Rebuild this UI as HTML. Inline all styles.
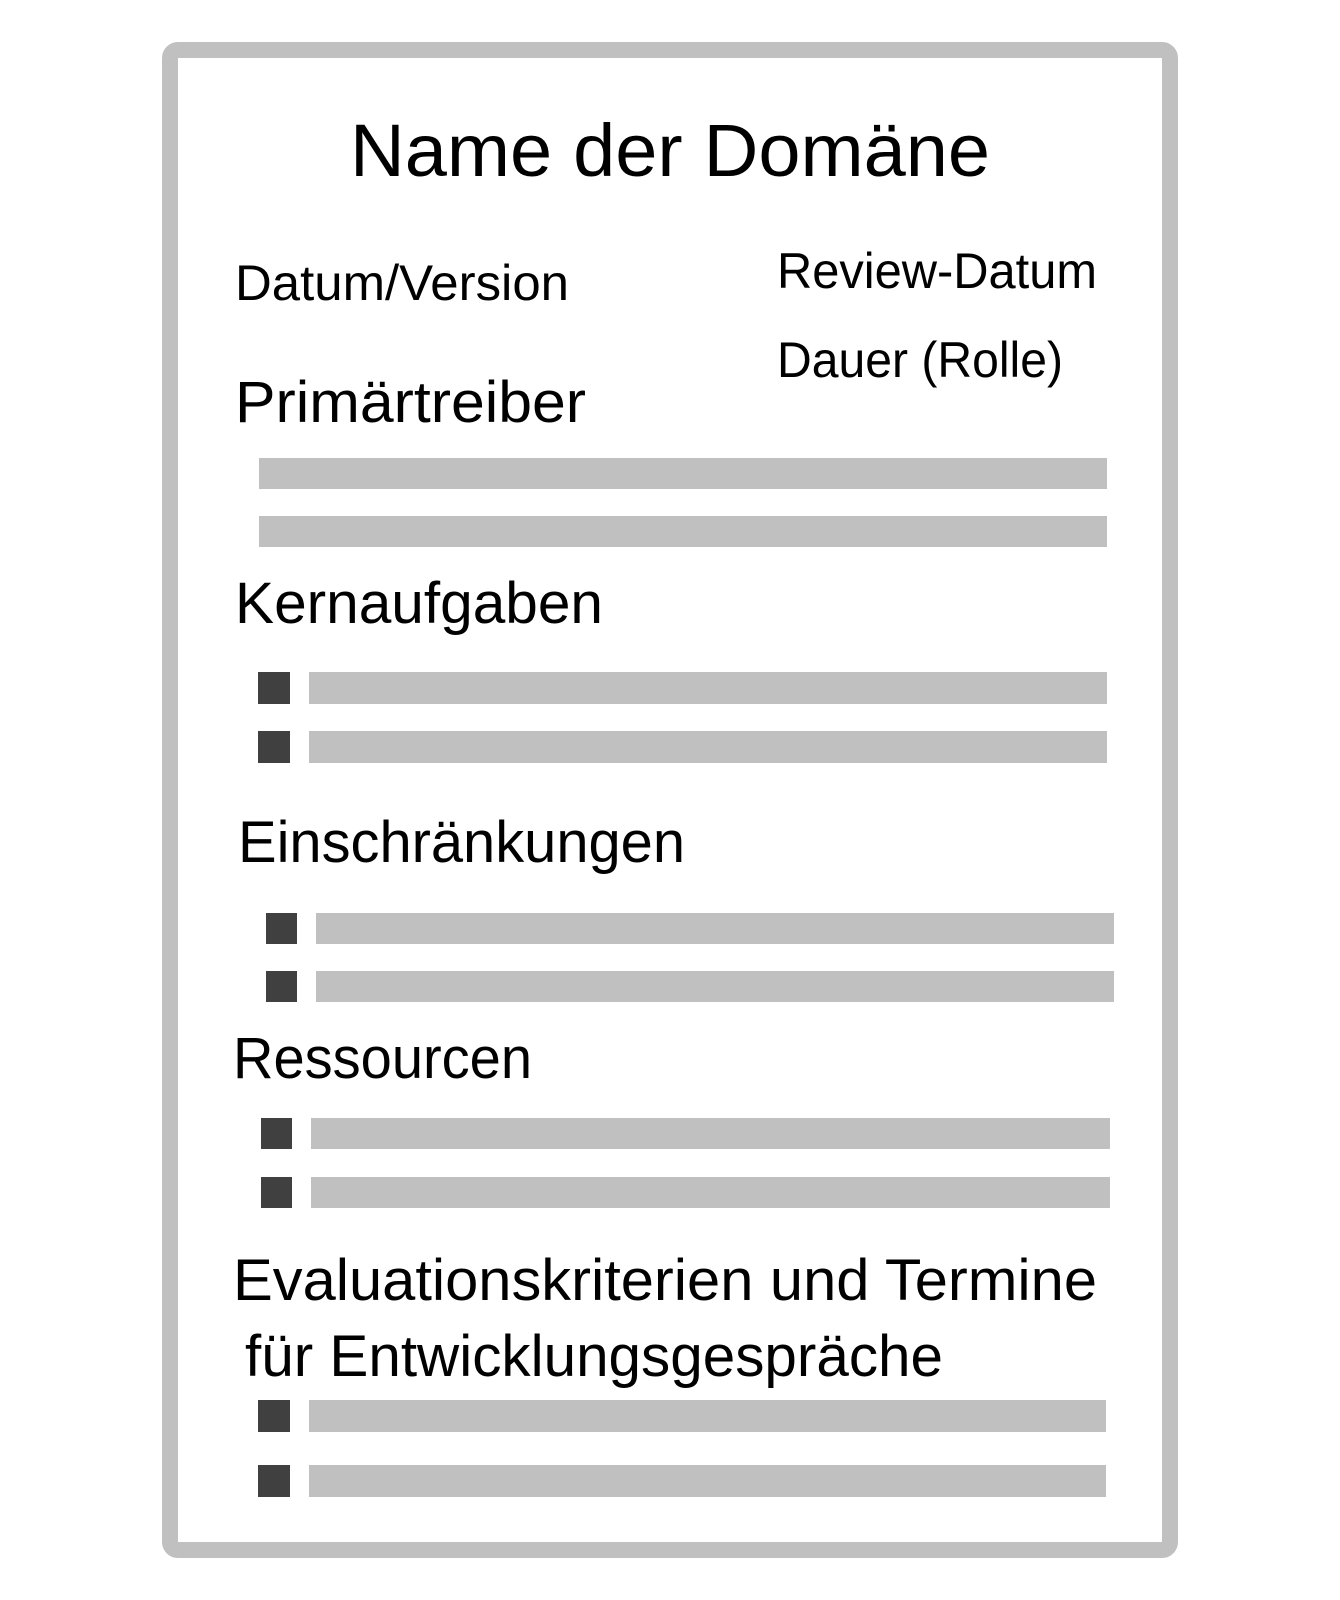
<!DOCTYPE html>
<html><head><meta charset="utf-8"><style>html,body{margin:0;padding:0;background:#fff}svg{display:block}</style></head>
<body>
<svg width="1340" height="1600" viewBox="0 0 1340 1600" xmlns="http://www.w3.org/2000/svg" font-family="Liberation Sans, sans-serif" fill="#000">
<rect x="170" y="50" width="1000" height="1500" rx="8" fill="#fff" stroke="#c0c0c0" stroke-width="16"/>
<text x="670" y="176" font-size="74" text-anchor="middle" textLength="640" lengthAdjust="spacingAndGlyphs">Name der Domäne</text>
<g font-size="50">
<text x="235" y="300" textLength="334" lengthAdjust="spacingAndGlyphs">Datum/Version</text>
<text x="777" y="288" textLength="320" lengthAdjust="spacingAndGlyphs">Review-Datum</text>
<text x="777" y="377" textLength="286" lengthAdjust="spacingAndGlyphs">Dauer (Rolle)</text>
</g>
<g font-size="58">
<text x="235" y="422" textLength="351" lengthAdjust="spacingAndGlyphs">Primärtreiber</text>
<text x="235" y="623" textLength="368" lengthAdjust="spacingAndGlyphs">Kernaufgaben</text>
<text x="238" y="862" textLength="447" lengthAdjust="spacingAndGlyphs">Einschränkungen</text>
<text x="233" y="1078" textLength="299" lengthAdjust="spacingAndGlyphs">Ressourcen</text>
<text x="233" y="1300" textLength="864" lengthAdjust="spacingAndGlyphs">Evaluationskriterien und Termine</text>
<text x="245" y="1376" textLength="698" lengthAdjust="spacingAndGlyphs">für Entwicklungsgespräche</text>
</g>
<g fill="#c0c0c0">
<rect x="259" y="458" width="848" height="31"/>
<rect x="259" y="516" width="848" height="31"/>
<rect x="309" y="672" width="798" height="32"/>
<rect x="309" y="731" width="798" height="32"/>
<rect x="316" y="913" width="798" height="31"/>
<rect x="316" y="971" width="798" height="31"/>
<rect x="311" y="1118" width="799" height="31"/>
<rect x="311" y="1177" width="799" height="31"/>
<rect x="309" y="1400" width="797" height="32"/>
<rect x="309" y="1465" width="797" height="32"/>
</g>
<g fill="#404040">
<rect x="258" y="672" width="32" height="32"/>
<rect x="258" y="731" width="32" height="32"/>
<rect x="266" y="913" width="31" height="31"/>
<rect x="266" y="971" width="31" height="31"/>
<rect x="261" y="1118" width="31" height="31"/>
<rect x="261" y="1177" width="31" height="31"/>
<rect x="258" y="1400" width="32" height="32"/>
<rect x="258" y="1465" width="32" height="32"/>
</g>
</svg>
</body></html>
